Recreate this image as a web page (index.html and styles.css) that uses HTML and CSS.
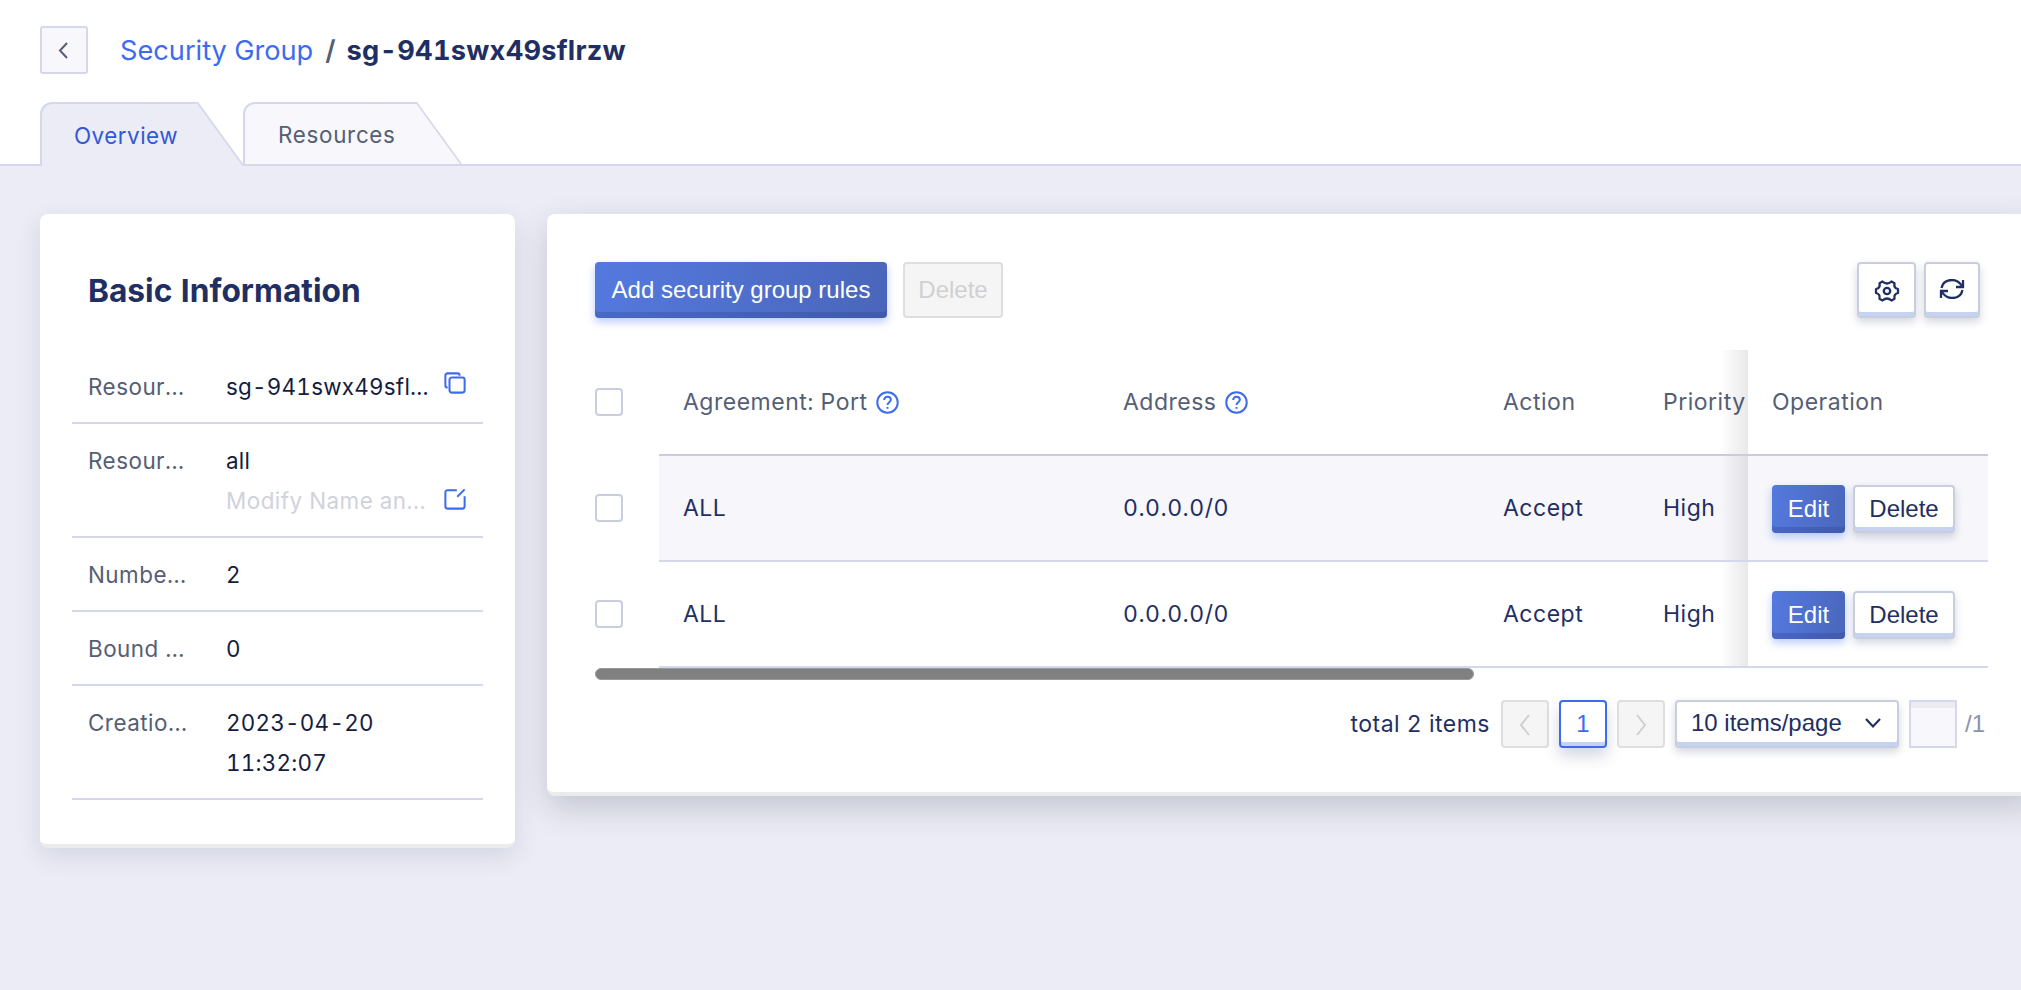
FILE: index.html
```html
<!DOCTYPE html>
<html lang="en">
<head>
    <meta charset="UTF-8">
    <title>Security Group</title>
    <link rel="stylesheet" href="styles.css">
</head>
<body>

<header class="page-head">
    <div class="title-row">
        <button class="back-btn" type="button">
            <svg width="24" height="24" viewBox="0 0 24 24" fill="none" stroke="#545e75" stroke-width="2"><path d="M15 5 L8 12.5 L15 20"/></svg>
        </button>
        <a class="crumb-link" href="#">Security Group</a>
        <span class="crumb-sep">/</span>
        <span class="crumb-current">sg-941swx49sflrzw</span>
    </div>
    <nav class="tabs">
        <a class="tab tab-active" href="#">Overview</a>
        <a class="tab" href="#">Resources</a>
    </nav>
</header>

<main class="content">
    <section class="info-card">
        <h2 class="info-title">Basic Information</h2>
        <div class="info-row">
            <span class="info-label">Resour...</span>
            <div class="info-value">
                <div class="value-line">
                    <span>sg-941swx49sfl...</span>
                    <svg class="line-icon" width="22" height="22" viewBox="0 0 24 24" fill="none" stroke="#3d6bf0" stroke-width="2.2"><path d="M4 17 Q1.5 17 1.5 15 V4 Q1.5 1.5 4 1.5 H15 Q17 1.5 17 4"/><rect x="6" y="6" width="16.5" height="16.5" rx="2.5"/></svg>
                </div>
            </div>
        </div>
        <div class="info-row">
            <span class="info-label">Resour...</span>
            <div class="info-value">
                <div class="value-line">all</div>
                <div class="value-line">
                    <span class="placeholder">Modify Name an...</span>
                    <svg class="line-icon edit-icon" width="22" height="22" viewBox="0 0 24 24" fill="none" stroke="#3d6bf0" stroke-width="2.2"><path d="M14 2.500 H4 Q1.500 2.500 1.500 5 V20 Q1.500 22.500 4 22.500 H20 Q22.500 22.500 22.500 20 V9"/><path d="M14.500 9.500 L22.500 1.500"/></svg>
                </div>
            </div>
        </div>
        <div class="info-row">
            <span class="info-label">Numbe...</span>
            <div class="info-value"><div class="value-line">2</div></div>
        </div>
        <div class="info-row">
            <span class="info-label">Bound ...</span>
            <div class="info-value"><div class="value-line">0</div></div>
        </div>
        <div class="info-row">
            <span class="info-label">Creatio...</span>
            <div class="info-value">
                <div class="value-line">2023-04-20</div>
                <div class="value-line">11:32:07</div>
            </div>
        </div>
    </section>

    <section class="rules-card">
        <div class="toolbar">
            <button class="btn btn-primary btn-large" type="button">Add security group rules</button>
            <button class="btn btn-disabled btn-large" type="button">Delete</button>
            <div class="toolbar-right">
                <button class="btn btn-plain btn-icon" type="button">
                    <svg width="26" height="24" viewBox="0 0 26 24" fill="none" stroke="#1f2f63" stroke-width="2.300" stroke-linejoin="round"><path d="M8.500 2.500 Q13 6.500 17.500 2.500 L20.500 4.200 Q19.500 9 24 10 V14 Q19.500 15 20.500 19.800 L17.500 21.500 Q13 17.500 8.500 21.500 L5.500 19.800 Q6.500 15 2 14 V10 Q6.500 9 5.500 4.200 Z"/><circle cx="13" cy="12" r="3.200"/></svg>
                </button>
                <button class="btn btn-plain btn-icon btn-refresh" type="button">
                    <svg width="26" height="20" viewBox="0 0 26 20" fill="none" stroke="#1f2f63" stroke-width="2.300"><path d="M2.500 9 C3.500 4 7.500 1 13 1 C17 1 20.500 3 23 7"/><path d="M24 1 V8 H17"/><path d="M23.500 11 C22.500 16 18.500 19 13 19 C9 19 5.500 17 3 13"/><path d="M2 19 V12 H9"/></svg>
                </button>
            </div>
        </div>

        <div class="rule-table">
            <div class="table-row table-head">
                <div class="cell-check"><span class="checkbox"></span></div>
                <div class="table-cells">
                    <div class="cell cell-port">Agreement: Port <svg class="tip" width="23" height="23" viewBox="0 0 22 22" fill="none" stroke="#3d6bf0" stroke-width="1.900"><circle cx="11" cy="11" r="9.800"/><path d="M7.800 8.600 C7.800 6.600 9.200 5.600 11 5.600 C12.800 5.600 14.200 6.800 14.200 8.400 C14.200 10.600 11 10.800 11 13.400"/><path d="M11 15.200 V17"/></svg></div>
                    <div class="cell cell-addr">Address <svg class="tip" width="23" height="23" viewBox="0 0 22 22" fill="none" stroke="#3d6bf0" stroke-width="1.900"><circle cx="11" cy="11" r="9.800"/><path d="M7.800 8.600 C7.800 6.600 9.200 5.600 11 5.600 C12.800 5.600 14.200 6.800 14.200 8.400 C14.200 10.600 11 10.800 11 13.400"/><path d="M11 15.200 V17"/></svg></div>
                    <div class="cell cell-action">Action</div>
                    <div class="cell cell-priority">Priority</div>
                    <div class="cell cell-op">Operation</div>
                </div>
            </div>
            <div class="table-row">
                <div class="cell-check"><span class="checkbox"></span></div>
                <div class="table-cells row-hover">
                    <div class="cell cell-port">ALL</div>
                    <div class="cell cell-addr">0.0.0.0/0</div>
                    <div class="cell cell-action">Accept</div>
                    <div class="cell cell-priority">High</div>
                    <div class="cell cell-op">
                        <button class="btn btn-primary btn-edit" type="button">Edit</button>
                        <button class="btn btn-plain btn-del" type="button">Delete</button>
                    </div>
                </div>
            </div>
            <div class="table-row">
                <div class="cell-check"><span class="checkbox"></span></div>
                <div class="table-cells">
                    <div class="cell cell-port">ALL</div>
                    <div class="cell cell-addr">0.0.0.0/0</div>
                    <div class="cell cell-action">Accept</div>
                    <div class="cell cell-priority">High</div>
                    <div class="cell cell-op">
                        <button class="btn btn-primary btn-edit" type="button">Edit</button>
                        <button class="btn btn-plain btn-del" type="button">Delete</button>
                    </div>
                </div>
            </div>
            <div class="scroll-thumb"></div>
        </div>

        <div class="pager">
            <span class="pager-total">total 2 items</span>
            <button class="btn btn-disabled page-btn" type="button">
                <svg width="16" height="26" viewBox="0 0 16 26" fill="none" stroke="#cfcfcf" stroke-width="2"><path d="M12 4 L4 14 L12 24"/></svg>
            </button>
            <button class="btn page-btn page-current" type="button">1</button>
            <button class="btn btn-disabled page-btn" type="button">
                <svg width="16" height="26" viewBox="0 0 16 26" fill="none" stroke="#cfcfcf" stroke-width="2"><path d="M4 4 L12 14 L4 24"/></svg>
            </button>
            <button class="btn btn-plain page-size" type="button">
                <span>10 items/page</span>
                <svg width="18" height="12" viewBox="0 0 18 12" fill="none" stroke="#1f2f63" stroke-width="2.200"><path d="M2 2 L9 9.500 L16 2"/></svg>
            </button>
            <input class="page-input" type="text">
            <span class="page-count">/1</span>
        </div>
    </section>
</main>

</body>
</html>
```

FILE: styles.css
```css
html, body {
    height: 100%;
}

body {
    margin: 0;
    overflow: hidden;
    background-color: #ebecf5;
    font-family: Inter, 'Noto Sans', sans-serif;
    font-size: 22.4px;
    font-variant-numeric: tabular-nums;
    color: #1f2f63;
}

button {
    font-family: 'Liberation Sans', Arial, sans-serif;
    cursor: pointer;
}

/* Page header */
.page-head {
    height: 166px;
    box-sizing: border-box;
    padding: 26px 0 0 40px;
    background-color: #fff;
    border-bottom: 2px solid #d5d8ea;
}

.title-row {
    display: flex;
    align-items: center;
    height: 48px;
}

.back-btn {
    display: flex;
    align-items: center;
    justify-content: center;
    width: 48px;
    height: 48px;
    margin-right: 32px;
    padding: 0;
    background-color: #f8f8fc;
    border: 2px solid #d5d8ea;
    border-radius: 3px;
}

.crumb-link {
    color: #3d6bf0;
    font-size: 27.2px;
    text-decoration: none;
}

.crumb-sep {
    margin: 0 11px 0 12px;
    color: #545e75;
    font-size: 27.2px;
    font-weight: 600;
}

.crumb-current {
    color: #1f2f63;
    font-size: 27.2px;
    font-weight: 700;
    letter-spacing: 0.25px;
}

/* Tabs */
.tabs {
    display: flex;
    margin-top: 28px;
}

.tab {
    position: relative;
    isolation: isolate;
    display: flex;
    align-items: center;
    box-sizing: border-box;
    width: 174px;
    height: 62px;
    margin-right: 45px;
    padding-left: 33px;
    background-color: #f8f8fc;
    border: 2px solid #d5d8ea;
    border-width: 2px 0 0 2px;
    border-radius: 12px 0 0 0;
    color: #545e75;
    text-decoration: none;
    letter-spacing: 0.7px;
}

/* slanted right side of the tab */
.tab::after {
    content: "";
    position: absolute;
    z-index: -1;
    top: -2px;
    right: 0;
    width: 45px;
    height: 100%;
    background-color: inherit;
    border-top: 2px solid #d5d8ea;
    border-right: 2px solid #d5d8ea;
    transform: skewX(36deg);
    transform-origin: top left;
}

.tab-active {
    width: 158px;
    height: 64px;
    margin-bottom: -2px;
    padding-left: 32px;
    background-color: #ebecf5;
    color: #3358d4;
    letter-spacing: 0.5px;
}

/* Main area */
.content {
    display: flex;
    align-items: flex-start;
    gap: 32px;
    padding: 48px 0 0 40px;
}

.info-card {
    flex: none;
    box-sizing: border-box;
    width: 475px;
    height: 634px;
    padding: 57px 32px 0;
    background-color: #fff;
    border-bottom: 4px solid #ebebeb;
    border-radius: 8px;
    box-shadow: 0 8px 24px rgba(40, 50, 90, 0.12);
}

.info-title {
    margin: 0 0 39px 16px;
    font-size: 31.7px;
    font-weight: 700;
    line-height: 40px;
    color: #1f2f63;
}

.info-row {
    display: flex;
    padding: 17px 16px 15px 16px;
    border-bottom: 2px solid #d5d8ea;
}

.info-label {
    flex: none;
    width: 138px;
    line-height: 40px;
    color: #545e75;
    letter-spacing: 0.5px;
}

.info-value {
    flex: 1;
    color: #141d3f;
    letter-spacing: 0.25px;
}

.value-line {
    display: flex;
    align-items: center;
    justify-content: space-between;
    height: 40px;
    line-height: 38px;
}

.placeholder {
    color: #d0d2dc;
    letter-spacing: 0.5px;
}

.line-icon {
    flex: none;
    margin-right: 1px;
    margin-bottom: 8px;
}

.edit-icon {
    margin-bottom: 4px;
}

.rules-card {
    flex: none;
    box-sizing: border-box;
    width: 1489px;
    height: 582px;
    padding: 48px 48px 0;
    background-color: #fff;
    border-bottom: 4px solid #ebebeb;
    border-radius: 8px;
    box-shadow: 0 12px 32px rgba(40, 45, 70, 0.2);
}

/* Buttons */
.btn {
    box-sizing: border-box;
    padding: 0;
    font-size: 24px;
    border-radius: 4px;
    border: 2px solid transparent;
}

.btn-primary {
    color: #fff;
    border: 0;
    background: linear-gradient(100deg, #5479de, #4a66bb);
    box-shadow: inset 0 -6px 0 rgba(30, 50, 120, 0.22), 0 4px 8px rgba(61, 107, 240, 0.35);
}

.btn-plain {
    background-color: #fff;
    color: #1f2f63;
    border-color: #c9cede;
    box-shadow: inset 0 -4px 0 #c5d2f0, 0 4px 8px rgba(40, 50, 90, 0.2);
}

.btn-disabled {
    background-color: #f5f5f5;
    color: #d0d0d0;
    border-color: #dedede;
}

.btn-large {
    height: 56px;
}

.toolbar {
    display: flex;
    align-items: center;
    gap: 16px;
    padding-right: 8px;
}

.toolbar .btn-primary {
    width: 292px;
}

.toolbar .btn-disabled {
    width: 100px;
}

.toolbar-right {
    display: flex;
    gap: 8px;
    margin-left: auto;
}

.btn-icon {
    display: flex;
    align-items: center;
    justify-content: center;
    width: 59px;
    height: 56px;
    padding-top: 2px;
}

.btn-refresh {
    width: 56px;
    padding-top: 0;
    padding-bottom: 3px;
}

.btn-edit {
    width: 73px;
    height: 48px;
}

.btn-del {
    width: 102px;
    height: 48px;
    margin-left: 4px;
}

/* Table */
.rule-table {
    position: relative;
    margin-top: 32px;
}

.table-row {
    display: flex;
    height: 106px;
}

.table-head {
    color: #545e75;
}

.cell-check {
    flex: none;
    display: flex;
    align-items: center;
    box-sizing: border-box;
    width: 64px;
    padding-bottom: 2px;
}

.checkbox {
    box-sizing: border-box;
    width: 28px;
    height: 28px;
    background-color: #fff;
    border: 2px solid #c9cede;
    border-radius: 4px;
}

.table-cells {
    flex: 1;
    display: flex;
    box-sizing: border-box;
    border-bottom: 2px solid #d5d8ea;
}

.table-head .table-cells {
    border-bottom-color: #c8cdde;
}

.row-hover {
    background-color: #f6f6fb;
}

.cell {
    display: flex;
    align-items: center;
    gap: 8px;
    box-sizing: border-box;
    padding-left: 24px;
    font-size: 23px;
    letter-spacing: 0.5px;
}

.cell-port {
    width: 440px;
}

.cell-addr {
    width: 380px;
}

.cell-action {
    width: 160px;
}

.cell-priority {
    width: 109px;
}

.cell-op {
    flex: 1;
    gap: 4px;
    position: relative;
    background-color: inherit;
}

.table-row:not(.table-head) .cell-op {
    padding-top: 2px;
}

/* shadow of the fixed operation column */
.cell-op::before {
    content: "";
    position: absolute;
    top: 0;
    bottom: 0;
    right: 100%;
    width: 28px;
    background: linear-gradient(to right, rgba(0, 0, 0, 0), rgba(0, 0, 0, 0.09));
}

.scroll-thumb {
    position: absolute;
    left: 0;
    top: 318px;
    width: 879px;
    height: 12px;
    background-color: #808080;
    border: 1px solid #999;
    box-sizing: border-box;
    border-radius: 6px;
}

/* Pagination */
.pager {
    display: flex;
    align-items: center;
    gap: 10px;
    margin-top: 32px;
    padding-right: 3px;
    justify-content: flex-end;
    font-family: 'Liberation Sans', Arial, sans-serif;
}

.pager-total {
    margin-right: 1px;
    font-family: Inter, sans-serif;
    font-size: 23px;
    letter-spacing: 0.5px;
}

.page-btn {
    display: flex;
    align-items: center;
    justify-content: center;
    width: 48px;
    height: 48px;
}

.page-current {
    background-color: #fff;
    border-color: #3d6bf0;
    color: #3d6bf0;
    box-shadow: inset 0 -4px 0 #c5d2f0, 0 8px 16px rgba(40, 50, 90, 0.2);
}

.page-size {
    display: flex;
    align-items: center;
    justify-content: space-between;
    width: 224px;
    height: 48px;
    padding: 0 15px 2px 14px;
}

.page-input {
    box-sizing: border-box;
    width: 48px;
    height: 48px;
    padding: 0;
    background-color: #f8f8fc;
    border: 2px solid #d5d8ea;
    box-shadow: inset 0 6px 0 #ebebf0;
}

.page-count {
    margin-left: -2px;
    font-size: 24px;
    color: #8a93ad;
}
```
